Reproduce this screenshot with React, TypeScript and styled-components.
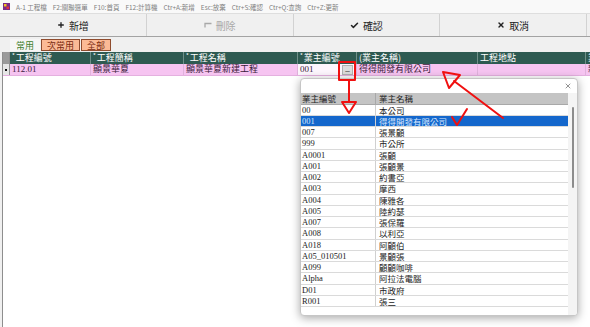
import React from 'react';
import styled, { createGlobalStyle } from 'styled-components';
import { Plus, Check, X } from 'lucide-react';

const GlobalStyle = createGlobalStyle`
  html, body { margin: 0; padding: 0; }
  body {
    width: 590px;
    height: 327px;
    overflow: hidden;
    background: #f0f0f0;
    font-family: "Noto Sans CJK TC", "Noto Sans", sans-serif;
  }
`;

const Page = styled.div`
  position: relative;
  display: flex;
  flex-direction: column;
  width: 590px;
  height: 327px;
  overflow: hidden;
  background: #f0f0f0;
`;

const TitleBar = styled.div`
  height: 13px;
  display: flex;
  align-items: center;
  gap: 6px;
  padding-left: 3px;
  background: #f9f9f9;
  font-family: "Noto Sans CJK TC", sans-serif;
  font-size: 6.5px;
  color: #808080;
  white-space: nowrap;
`;

const AppIcon = styled.svg`
  width: 7px;
  height: 7px;
  flex: none;
`;

const Toolbar = styled.div`
  height: 22px;
  display: flex;
  border-top: 1px solid #dedede;
  border-bottom: 1px solid #a3a3a3;
  background: #f0f0f0;
`;

const ToolButton = styled.div<{ $disabled?: boolean }>`
  width: 146.75px;
  flex: none;
  display: flex;
  align-items: center;
  justify-content: center;
  gap: 4px;
  border-right: 1px solid #d2d2d2;
  box-sizing: border-box;
  font-size: 10px;
  color: ${p => (p.$disabled ? '#a8a8a8' : '#222')};
`;

const TabRow = styled.div`
  height: 15px;
  display: flex;
  align-items: flex-end;
  gap: 1px;
  padding-left: 10px;
  box-sizing: border-box;
  padding-bottom: 1px;
`;

const Tab = styled.div<{ $active?: boolean }>`
  height: 12px;
  padding: 0 5px;
  box-sizing: border-box;
  font-size: 9px;
  line-height: 11px;
  color: ${p => (p.$active ? '#3f7f2f' : '#7a2a10')};
  background: ${p => (p.$active ? '#f6f6f6' : '#fbba96')};
  border: 1px solid ${p => (p.$active ? 'transparent' : '#8f4c2e')};
`;

const Grid = styled.div`
  flex: 1;
  margin-left: 2px;
  border-left: 1px solid #8e8e8e;
  background: #fff;
  overflow: hidden;
`;

const HeadRow = styled.div`
  display: flex;
  height: 12px;
  background: #2e5a51;
  white-space: nowrap;
`;

const DataRow = styled.div`
  display: flex;
  height: 11px;
  background: #f6c4f1;
  border-bottom: 1px solid #e4b0df;
  white-space: nowrap;
`;

const Indicator = styled.div<{ $head?: boolean }>`
  width: 6px;
  flex: none;
  display: flex;
  align-items: center;
  justify-content: center;
  background: ${p => (p.$head ? '#9a9a9a' : '#e6e6e6')};
  border-right: 1px solid #8e8e8e;
`;

const Marker = styled.span`
  width: 2px;
  height: 2px;
  background: #111;
`;

const HeadCell = styled.div<{ $w: number }>`
  width: ${p => p.$w}px;
  flex: none;
  box-sizing: border-box;
  padding-left: 2px;
  border-right: 1px solid #6f8f88;
  color: #fff;
  font-size: 9px;
  line-height: 12px;
  overflow: hidden;
`;

const Star = styled.span`
  font-size: 6px;
  vertical-align: top;
  line-height: 8px;
  margin-right: 1px;
`;

const DataCell = styled.div<{ $w: number; $edit?: boolean }>`
  width: ${p => p.$w}px;
  flex: none;
  display: flex;
  align-items: center;
  box-sizing: border-box;
  padding-left: 2px;
  border-right: 1px solid #e0b2dc;
  background: ${p => (p.$edit ? '#fdf6fd' : 'transparent')};
  color: #3a1a3a;
  font-family: "Liberation Serif", "Noto Sans CJK TC", serif;
  font-size: 9px;
  line-height: 11px;
  overflow: hidden;
`;

const CodeText = styled.span`
  flex: 1;
`;

const PickButton = styled.div`
  width: 11px;
  height: 10px;
  margin-right: 3px;
  box-sizing: border-box;
  background: #dcdcdc;
  border: 1px solid #b0b0b0;
  display: flex;
  align-items: flex-end;
  justify-content: center;
  font-family: "Liberation Sans", sans-serif;
  font-size: 8px;
  line-height: 7px;
  color: #111;
`;

const Popup = styled.div`
  position: absolute;
  left: 300px;
  top: 78px;
  width: 278px;
  height: 238px;
  box-sizing: border-box;
  display: flex;
  flex-direction: column;
  background: #fff;
  border: 1px solid #c6c6c6;
  border-radius: 4px;
  box-shadow: 0 2px 10px rgba(0, 0, 0, 0.35);
  overflow: hidden;
`;

const PopupTop = styled.div`
  height: 14px;
  flex: none;
  display: flex;
  justify-content: flex-end;
  align-items: center;
  padding-right: 5px;
  color: #333;
`;

const PopupBody = styled.div`
  flex: 1;
  display: flex;
`;

const List = styled.div`
  width: 267px;
  flex: none;
  display: flex;
  flex-direction: column;
`;

const ListHead = styled.div`
  display: flex;
  height: 10.5px;
  background: #c4c4c4;
  border-bottom: 1px solid #a8a8a8;
  color: #222;
  font-size: 8.5px;
  line-height: 10.5px;
`;

const HeadLabel = styled.div<{ $w?: number }>`
  ${p => (p.$w ? `width: ${p.$w}px; flex: none; border-right: 1px solid #a8a8a8;` : 'flex: 1;')}
  box-sizing: border-box;
  padding-left: ${p => (p.$w ? 1 : 3)}px;
`;

const ListRow = styled.div<{ $selected?: boolean }>`
  display: flex;
  height: 11.25px;
  box-sizing: border-box;
  border-bottom: 1px solid #dadada;
  background: ${p => (p.$selected ? '#1467cc' : '#fff')};
  color: ${p => (p.$selected ? '#d8e8ff' : '#222')};
  font-size: 8.5px;
  line-height: 10.5px;
  white-space: nowrap;
`;

const CodeCell = styled.div`
  width: 75px;
  flex: none;
  box-sizing: border-box;
  padding-left: 1px;
  border-right: 1px solid #d0d0d0;
  font-family: "Liberation Serif", serif;
`;

const NameCell = styled.div`
  flex: 1;
  padding-left: 3px;
  font-family: "Noto Sans CJK TC", sans-serif;
`;

const Track = styled.div`
  flex: 1;
  position: relative;
  background: #f4f4f4;
`;

const Thumb = styled.div`
  position: absolute;
  left: 4px;
  top: 14px;
  width: 2px;
  height: 81px;
  background: #8c8c8c;
  border-radius: 1px;
`;

const Marks = styled.svg`
  position: absolute;
  left: 0;
  top: 0;
  width: 590px;
  height: 327px;
  pointer-events: none;
`;

const hints = [
  'A-1 工程檔',
  'F2:關聯選單',
  'F10:首頁',
  'F12:計算機',
  'Ctr+A:新增',
  'Esc:放棄',
  'Ctr+S:確認',
  'Ctr+Q:查詢',
  'Ctr+Z:更新',
];

const columns = [
  { w: 81, title: '工程編號', star: true },
  { w: 93, title: '工程簡稱', star: true },
  { w: 114, title: '工程名稱', star: true },
  { w: 59, title: '業主編號', star: true },
  { w: 121, title: '(業主名稱)' },
  { w: 108, title: '工程地點' },
  { w: 80, title: '業' },
];

const owners = [
  ['00', '本公司'],
  ['001', '得得開發有限公司'],
  ['007', '張景顧'],
  ['999', '市公所'],
  ['A0001', '張顧'],
  ['A001', '張顧景'],
  ['A002', '約書亞'],
  ['A003', '摩西'],
  ['A004', '陳雅各'],
  ['A005', '陸約瑟'],
  ['A007', '張保羅'],
  ['A008', '以利亞'],
  ['A018', '阿顧伯'],
  ['A05_010501', '景顧張'],
  ['A099', '顧顧咖啡'],
  ['Alpha', '阿拉法電腦'],
  ['D01', '市政府'],
  ['R001', '張三'],
];

function App() {
  return (
    <Page>
      <GlobalStyle />
      <TitleBar>
        <AppIcon viewBox="0 0 7 7">
          <rect width="7" height="7" fill="#7a2a86" />
          <rect x="1" y="1" width="2.5" height="2.5" fill="#f0c020" />
          <rect x="3.5" y="3.5" width="2.5" height="2.5" fill="#e03040" />
        </AppIcon>
        {hints.map(h => (
          <span key={h}>{h}</span>
        ))}
      </TitleBar>

      <Toolbar>
        <ToolButton>
          <Plus size={8} strokeWidth={4} />
          新增
        </ToolButton>
        <ToolButton $disabled>
          <svg width="8" height="6" viewBox="0 0 8 6">
            <path d="M1 5.5V1.5H7.5" stroke="#a8a8a8" strokeWidth="1.3" fill="none" />
          </svg>
          刪除
        </ToolButton>
        <ToolButton>
          <Check size={9} strokeWidth={4} />
          確認
        </ToolButton>
        <ToolButton>
          <X size={8} strokeWidth={4} />
          取消
        </ToolButton>
      </Toolbar>

      <TabRow>
        <Tab $active>常用</Tab>
        <Tab>次常用</Tab>
        <Tab>全部</Tab>
      </TabRow>

      <Grid>
        <HeadRow>
          <Indicator $head />
          {columns.map(c => (
            <HeadCell key={c.title} $w={c.w}>
              {c.star && <Star>*</Star>}
              {c.title}
            </HeadCell>
          ))}
        </HeadRow>
        <DataRow>
          <Indicator>
            <Marker />
          </Indicator>
          <DataCell $w={81}>112.01</DataCell>
          <DataCell $w={93}>顯景華夏</DataCell>
          <DataCell $w={114}>顯景華夏新建工程</DataCell>
          <DataCell $w={59} $edit>
            <CodeText>001</CodeText>
            <PickButton>–</PickButton>
          </DataCell>
          <DataCell $w={121}>得得開發有限公司</DataCell>
          <DataCell $w={108} />
          <DataCell $w={80}>新</DataCell>
        </DataRow>
      </Grid>

      <Popup>
        <PopupTop>
          <X size={8} strokeWidth={1.6} />
        </PopupTop>
        <PopupBody>
          <List>
            <ListHead>
              <HeadLabel $w={75}>業主編號</HeadLabel>
              <HeadLabel>業主名稱</HeadLabel>
            </ListHead>
            {owners.map(([code, name]) => (
              <ListRow key={code} $selected={code === '001'}>
                <CodeCell>{code}</CodeCell>
                <NameCell>{name}</NameCell>
              </ListRow>
            ))}
          </List>
          <Track>
            <Thumb />
          </Track>
        </PopupBody>
      </Popup>

      <Marks viewBox="0 0 590 327">
        <g stroke="#f01010" strokeWidth="2" fill="none" strokeLinejoin="round" strokeLinecap="round">
          <rect x="339" y="62" width="16" height="18" />
          <line x1="349" y1="80" x2="349" y2="102" />
          <polygon points="342,102 356,102 349,113" />
          <line x1="503" y1="118" x2="454" y2="81" />
          <polygon points="443,72 460,75 449,88" />
          <polyline points="452,117 457,125 467,109" />
        </g>
      </Marks>
    </Page>
  );
}

export default App;
